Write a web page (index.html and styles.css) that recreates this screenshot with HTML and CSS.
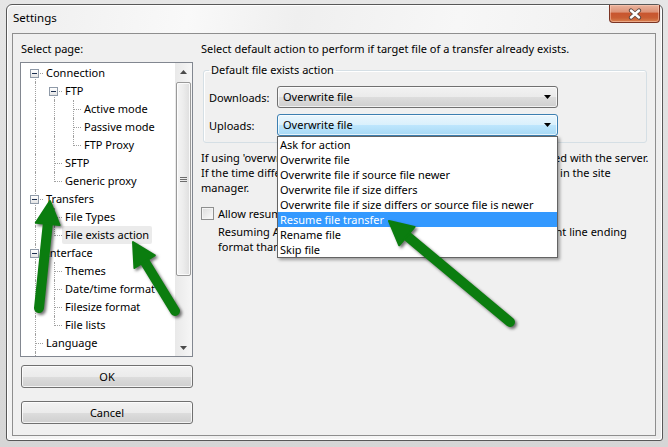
FILE: index.html
```html
<!DOCTYPE html>
<html lang="en">
<head>
<meta charset="utf-8">
<title>Settings</title>
<link rel="stylesheet" href="styles.css">
</head>
<body>
<div class="window">
  <div class="titlebar">
    <span class="title">Settings</span>
    <div class="close">
      <svg width="16" height="12" viewBox="0 0 16 12"><path d="M4 2.5 L12 9.5 M12 2.5 L4 9.5" stroke="#5c4640" stroke-width="4.2" stroke-linecap="round"/><path d="M4 2.5 L12 9.5 M12 2.5 L4 9.5" stroke="#fff" stroke-width="2.4" stroke-linecap="round"/></svg>
    </div>
  </div>
  <div class="client">
    <div class="left">
      <div class="label">Select page:</div>
      <div class="treebox">
        <ul class="tree">
          <li class="row"><span class="c first"><i class="exp"></i></span><span class="t">Connection</span></li>
          <li class="row"><span class="c pipe"></span><span class="c first"><i class="exp"></i></span><span class="t">FTP</span></li>
          <li class="row"><span class="c pipe"></span><span class="c pipe"></span><span class="c tee"></span><span class="t">Active mode</span></li>
          <li class="row"><span class="c pipe"></span><span class="c pipe"></span><span class="c tee"></span><span class="t">Passive mode</span></li>
          <li class="row"><span class="c pipe"></span><span class="c pipe"></span><span class="c elbow"></span><span class="t">FTP Proxy</span></li>
          <li class="row"><span class="c pipe"></span><span class="c tee"></span><span class="t">SFTP</span></li>
          <li class="row"><span class="c pipe"></span><span class="c elbow"></span><span class="t">Generic proxy</span></li>
          <li class="row"><span class="c tee"><i class="exp"></i></span><span class="t">Transfers</span></li>
          <li class="row"><span class="c pipe"></span><span class="c tee"></span><span class="t">File Types</span></li>
          <li class="row"><span class="c pipe"></span><span class="c elbow"></span><span class="t sel">File exists action</span></li>
          <li class="row"><span class="c tee"><i class="exp"></i></span><span class="t">Interface</span></li>
          <li class="row"><span class="c pipe"></span><span class="c tee"></span><span class="t">Themes</span></li>
          <li class="row"><span class="c pipe"></span><span class="c tee"></span><span class="t">Date/time format</span></li>
          <li class="row"><span class="c pipe"></span><span class="c tee"></span><span class="t">Filesize format</span></li>
          <li class="row"><span class="c pipe"></span><span class="c elbow"></span><span class="t">File lists</span></li>
          <li class="row"><span class="c tee"></span><span class="t">Language</span></li>
          <li class="row"><span class="c pipe"></span></li>
        </ul>
        <div class="vscroll">
          <div class="sbtn"><svg width="7" height="4" viewBox="0 0 7 4"><polygon points="0,4 7,4 3.5,0" fill="#4a4a4a"/></svg></div>
          <div class="thumb"><svg width="7" height="7" viewBox="0 0 7 7"><path d="M0 1.5h7M0 3.5h7M0 5.5h7" stroke="#6d6d6d" stroke-width="1"/></svg></div>
          <div class="sbtn down"><svg width="7" height="4" viewBox="0 0 7 4"><polygon points="0,0 7,0 3.5,4" fill="#4a4a4a"/></svg></div>
        </div>
      </div>
      <button class="btn ok">OK</button>
      <button class="btn cancel">Cancel</button>
    </div>
    <div class="right">
      <p class="intro">Select default action to perform if target file of a transfer already exists.</p>
      <fieldset class="group">
        <legend>Default file exists action</legend>
        <div class="frow">
          <span class="flabel">Downloads:</span>
          <div class="combo">
            <span>Overwrite file</span>
            <svg class="carrow" width="7" height="4" viewBox="0 0 7 4"><polygon points="0,0 7,0 3.5,4" fill="#000"/></svg>
          </div>
        </div>
        <div class="frow second">
          <span class="flabel">Uploads:</span>
          <div class="combo focus">
            <span>Overwrite file</span>
            <svg class="carrow" width="7" height="4" viewBox="0 0 7 4"><polygon points="0,0 7,0 3.5,4" fill="#000"/></svg>
            <ul class="dropdown">
              <li>Ask for action</li>
              <li>Overwrite file</li>
              <li>Overwrite file if source file newer</li>
              <li>Overwrite file if size differs</li>
              <li>Overwrite file if size differs or source file is newer</li>
              <li class="hl">Resume file transfer</li>
              <li>Rename file</li>
              <li>Skip file</li>
            </ul>
          </div>
        </div>
      </fieldset>
      <p class="note">If using 'overwrite if newer', the local clock time has to be synchronized with the server.<br>If the time differs, use the right timezone offset setting for the server in the site<br>manager.</p>
      <div class="check"><span class="cbox"></span><span>Allow resuming of ASCII files</span></div>
      <p class="sub">Resuming ASCII files can cause problems if a server uses a different line ending<br>format than the client.</p>
    </div>
  </div>
</div>
<svg class="arrows" width="668" height="447" viewBox="0 0 668 447">
  <g class="arrow">
    <line x1="39" y1="308" x2="48" y2="222" />
    <polygon points="50,201 59.6,225.1 35.8,222.7" />
  </g>
  <g class="arrow">
    <line x1="175" y1="311" x2="145" y2="262" />
    <polygon points="133,242 154.8,255.4 134.4,268" />
  </g>
  <g class="arrow">
    <line x1="510" y1="322" x2="407" y2="236" />
    <polygon points="389,221 414.6,226.9 399.2,245.3" />
  </g>
</svg>
</body>
</html>
```
FILE: styles.css
```css
* { box-sizing: border-box; }

body {
  margin: 0;
  width: 668px;
  height: 447px;
  padding: 4px 0 0 6px;
  position: relative;
  overflow: hidden;
  background: linear-gradient(#e6e6e6, #d6d6d6);
  font-family: "Noto Sans", "DejaVu Sans", sans-serif;
  font-size: 11px;
  color: #000;
}

.window {
  width: 657px;
  height: 437px;
  border: 1px solid #585858;
  border-radius: 6px 6px 3px 3px;
  background: linear-gradient(100deg, #eeeeee 0%, #f9f9f9 25%, #efefef 40%, #f7f7f7 62%, #ececec 100%);
  box-shadow: inset 1px 1px 0 #fff, inset -1px -1px 0 #fff;
  padding: 0 6px 4px 5px;
  display: flex;
  flex-direction: column;
}

.titlebar {
  height: 28px;
  display: flex;
  align-items: flex-start;
}

.title {
  padding: 5px 0 0 1px;
  line-height: 16px;
  font-size: 11.5px;
  color: #000;
}

.close {
  margin-left: auto;
  margin-right: -4px;
  width: 51px;
  height: 18px;
  border: 1px solid #7a3424;
  border-top: none;
  border-radius: 0 0 4px 4px;
  background: linear-gradient(#eab39d 0%, #dd9479 40%, #c8562f 50%, #c95d33 75%, #d9824f 100%);
  box-shadow: inset 0 0 0 1px rgba(255, 210, 190, 0.5);
  display: flex;
  align-items: center;
  justify-content: center;
}

.client {
  height: 403px;
  border: 1px solid #8e8e8e;
  background: #f0f0f0;
  display: flex;
  padding: 7px 8px 0 7px;
}

.left {
  width: 173px;
  flex: none;
  display: flex;
  flex-direction: column;
}

.label {
  line-height: 16px;
  padding-left: 1px;
  margin-bottom: 5px;
}

.treebox {
  height: 295px;
  border: 1px solid #828790;
  background: #fff;
  display: flex;
  overflow: hidden;
}

.tree {
  flex: 1;
  list-style: none;
  margin: 0;
  padding: 1px 0 0 0;
  overflow: hidden;
}

.row {
  display: flex;
  height: 18px;
  align-items: stretch;
  white-space: nowrap;
}

.c {
  position: relative;
  flex: none;
  width: 19px;
  height: 18px;
}

.c::before,
.c::after {
  content: "";
  position: absolute;
}

.pipe::before,
.tee::before {
  left: 14px;
  top: 0;
  bottom: 0;
  border-left: 1px dotted #a0a0a0;
}

.elbow::before {
  left: 14px;
  top: 0;
  height: 10px;
  border-left: 1px dotted #a0a0a0;
}

.first::before {
  left: 14px;
  top: 9px;
  bottom: 0;
  border-left: 1px dotted #a0a0a0;
}

.tee::after,
.elbow::after,
.first::after {
  left: 15px;
  top: 9px;
  width: 7px;
  border-top: 1px dotted #a0a0a0;
}

.exp {
  position: absolute;
  left: 9px;
  top: 5px;
  width: 9px;
  height: 9px;
  border: 1px solid #8f9aa8;
  background: linear-gradient(#ffffff, #e4e4e4);
  z-index: 1;
}

.exp::after {
  content: "";
  position: absolute;
  left: 1px;
  top: 3px;
  width: 5px;
  height: 1px;
  background: #1c2f4f;
}

.t {
  margin-left: 3px;
  padding: 0 3px;
  line-height: 18px;
  height: 18px;
  border-radius: 2px;
}

.t.sel {
  background: #ebebeb;
}

.vscroll {
  width: 17px;
  flex: none;
  display: flex;
  flex-direction: column;
  background: linear-gradient(to right, #e9e9e9, #f6f6f6);
}

.sbtn {
  height: 17px;
  display: flex;
  align-items: center;
  justify-content: center;
}

.sbtn.down {
  margin-top: auto;
}

.thumb {
  margin: 2px 1px 0;
  height: 194px;
  border: 1px solid #9a9a9a;
  border-radius: 2px;
  background: linear-gradient(to right, #f5f5f5 0%, #ececec 50%, #dedede 100%);
  box-shadow: inset 0 0 0 1px rgba(255, 255, 255, 0.8);
  display: flex;
  align-items: center;
  justify-content: center;
}

.btn {
  margin: 8px 0 0 1px;
  width: 172px;
  height: 23px;
  padding: 0;
  border: 1px solid #707070;
  border-radius: 3px;
  background: linear-gradient(#f2f2f2 0%, #ebebeb 50%, #dddddd 50%, #cfcfcf 100%);
  box-shadow: inset 0 0 0 1px rgba(255, 255, 255, 0.75);
  font: inherit;
  color: #000;
  line-height: 21px;
}

.btn.cancel {
  margin-top: 13px;
}

.right {
  flex: 1;
  margin-left: 8px;
  min-width: 0;
}

.intro {
  margin: 0;
  line-height: 16px;
  white-space: nowrap;
}

.group {
  margin: 5px 0 0 2px;
  padding: 8px 5px 6px 5px;
  border: 1px solid #d5dfe5;
  border-radius: 3px;
  box-shadow: inset 1px 1px 0 #fff;
  min-width: 0;
}

.group legend {
  padding: 0 2px;
  line-height: 16px;
}

.frow {
  display: flex;
  align-items: center;
  height: 22px;
}

.frow.second {
  margin-top: 6px;
}

.flabel {
  width: 68px;
  flex: none;
}

.combo {
  position: relative;
  width: 281px;
  height: 22px;
  border: 1px solid #707070;
  border-radius: 3px;
  background: linear-gradient(#f2f2f2 0%, #ebebeb 50%, #dddddd 50%, #cfcfcf 100%);
  box-shadow: inset 0 0 0 1px rgba(255, 255, 255, 0.7);
  display: flex;
  align-items: center;
  padding: 0 6px 0 5px;
  line-height: 16px;
}

.combo.focus {
  border-color: #3c7fb1;
  background: linear-gradient(#eaf6fd 0%, #d9f0fc 50%, #bee6fd 50%, #a7d9f5 100%);
}

.carrow {
  margin-left: auto;
}

.dropdown {
  position: absolute;
  top: 21px;
  left: -1px;
  width: 281px;
  margin: 0;
  padding: 0;
  list-style: none;
  background: #fff;
  border: 1px solid #646464;
  box-shadow: 2px 2px 3px rgba(0, 0, 0, 0.35);
  z-index: 5;
}

.dropdown li {
  height: 15px;
  line-height: 15px;
  padding-left: 2px;
  white-space: nowrap;
}

.dropdown li.hl {
  background: #3399ff;
  color: #fff;
}

.note {
  margin: 7px 0 0 0;
  line-height: 15px;
  white-space: nowrap;
}

.check {
  margin-top: 11px;
  display: flex;
  align-items: center;
  height: 15px;
}

.cbox {
  width: 13px;
  height: 13px;
  margin-right: 4px;
  border: 1px solid #8e8f8f;
  background: linear-gradient(135deg, #dcdcdc, #fbfbfb);
  box-shadow: inset 0 0 0 1px #f4f4f4;
}

.sub {
  margin: 3px 0 0 17px;
  line-height: 15px;
  white-space: nowrap;
}

.arrows {
  position: absolute;
  left: 0;
  top: 0;
  pointer-events: none;
  z-index: 10;
}

.arrow {
  filter: drop-shadow(2px 2px 1.5px rgba(0, 0, 0, 0.55));
}

.arrow line {
  stroke: #0b7d0f;
  stroke-width: 10;
  stroke-linecap: round;
}

.arrow polygon {
  fill: #0b7d0f;
  stroke: #0b7d0f;
  stroke-width: 2;
  stroke-linejoin: round;
}
```
